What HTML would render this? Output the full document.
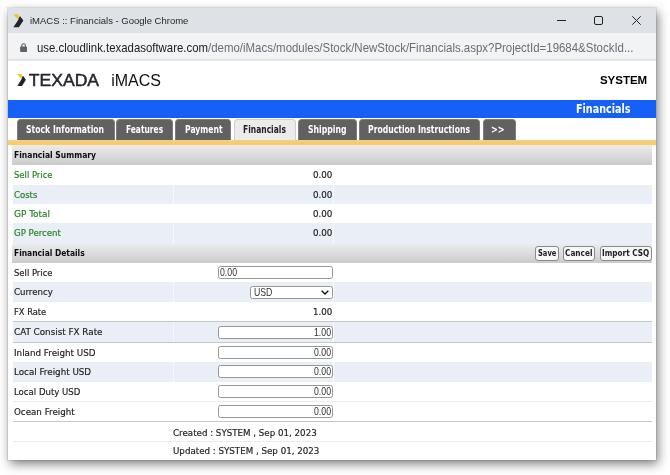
<!DOCTYPE html>
<html><head><meta charset="utf-8"><title>iMACS :: Financials</title>
<style>
*{box-sizing:border-box;margin:0;padding:0}
html,body{width:670px;height:475px;background:#fff;overflow:hidden}
body{position:relative;font-family:"DejaVu Sans Condensed","DejaVu Sans",sans-serif;font-size:10px;color:#222}
#win{position:absolute;left:8px;top:8px;width:648px;height:452px;background:#fff;box-shadow:2px 4px 10px 0 rgba(0,0,0,.5),0 0 0 1px rgba(0,0,0,.08)}
#clip{position:absolute;left:0;top:0;width:648px;height:452px;overflow:hidden}
#pc{filter:blur(.35px);position:absolute;left:-8px;top:-8px;width:670px;height:475px}
#pc div,#pc svg,.tx{position:absolute}
.tx{white-space:nowrap;transform-origin:0 50%;display:block}
#tb{left:8px;top:8px;width:648px;height:25px;background:#dee1e6}
#ub{left:8px;top:33px;width:648px;height:28px;background:#f1f3f4;border-bottom:1px solid #e6e7e9;box-shadow:inset 0 -1px 0 #dddfe2}
#blue{left:8px;top:100px;width:648px;height:18px;background:#1660f8}
.tab{top:119px;height:21px;background:#616161;border-radius:4px 4px 0 0;border:1px solid #7c7c7c;border-bottom:none}
.tab.on{background:#ececec;border-color:#cfcfcf}
#or{left:8px;top:140px;width:648px;height:5px;background:linear-gradient(rgba(214,178,104,.6) 0,rgba(214,178,104,.6) 1px,#fccb64 1px)}
.hd{left:12px;width:640px;background:linear-gradient(#ececec,#cbcbcb)}
.rb{left:13px;width:639px;background:#eaeff7}
.sep{width:1px;background:rgba(255,255,255,.6)}
.ln{left:13px;width:639px;height:1px;background:#c6c6c6}
.in{left:218px;width:115px;height:13px;border:1px solid #979797;border-radius:2.5px;background:#fff}
.btn{top:246px;height:15px;border:1px solid #8a8a8a;border-radius:3px;background:#f7f7f7}
</style></head><body>
<div id="win"><div id="clip"><div id="pc">
 <div id="tb"></div>
 <svg style="left:13px;top:13.5px" width="11" height="14" viewBox="0 0 11 14"><path d="M0.3 0.3L5.3 0.3 5.9 2.6 4.9 5.4Z" fill="#f8c21c"/><path d="M7.1 2.3L10.4 6.6 5.9 13.2H0.3L4.9 6.6 6.3 3Z" fill="#22252d"/></svg>
 <svg style="left:554px;top:8px" width="102" height="25" viewBox="0 0 102 25" fill="none" stroke="#222" stroke-width="1"><path d="M3 12.5h9"/><rect x="40.5" y="8.5" width="8" height="8" rx="1.5"/><path d="M78.3 8.3l8.4 8.4M86.7 8.3l-8.4 8.4"/></svg>
 <div id="ub"></div>
 <svg style="left:20px;top:42.8px" width="7.2" height="9" viewBox="0 0 7 9"><rect x="0" y="3.6" width="7" height="5.4" rx="0.9" fill="#5f6368"/><path d="M1.7 4V2.6a1.8 1.8 0 0 1 3.6 0V4" fill="none" stroke="#5f6368" stroke-width="1.1"/></svg>

 <svg style="left:17px;top:73px" width="84" height="14" viewBox="0 0 84 14"><path d="M0.3 1.0 4.5 1.0 5.0 3.1 4.2 5.7Z" fill="#f8c21c"/><path d="M6.0 2.8 8.9 6.8 5.0 13.0 0.3 13.0 4.2 6.8 5.4 3.5Z" fill="#22252d"/><text x="11.8" y="12.9" font-family="Liberation Sans, sans-serif" font-size="16.3" textLength="70.3" lengthAdjust="spacingAndGlyphs" fill="#22252d" stroke="#22252d" stroke-width="0.45">TEXADA</text></svg>

 <div id="blue"></div>
 <div class="tab" style="left:17px;width:98px"></div>
 <div class="tab" style="left:116px;width:57px"></div>
 <div class="tab" style="left:175px;width:56px"></div>
 <div class="tab on" style="left:234px;width:62px"></div>
 <div class="tab" style="left:298px;width:59px"></div>
 <div class="tab" style="left:359px;width:121px"></div>
 <div class="tab" style="left:483px;width:32.5px"></div>
 <div id="or"></div>

 <div class="rb" style="top:185px;height:19px"></div>
 <div class="rb" style="top:223px;height:21px"></div>
 <div class="rb" style="top:282px;height:20px"></div>
 <div class="rb" style="top:322px;height:20px"></div>
 <div class="rb" style="top:362px;height:20px"></div>
 <div class="sep" style="left:173px;top:164px;height:80px"></div>
 <div class="sep" style="left:333px;top:164px;height:80px"></div>
 <div class="sep" style="left:173px;top:263px;height:158px"></div>
 <div class="sep" style="left:333px;top:263px;height:158px"></div>
 <div class="ln" style="top:321px"></div>
 <div class="ln" style="top:342px"></div>
 <div class="ln" style="top:401px;background:#ebebeb"></div>
 <div class="ln" style="top:421px"></div>
 <div class="ln" style="top:441px;background:#ebebeb"></div>
 <div class="hd" style="top:145px;height:20px"></div>
 <div class="hd" style="top:244px;height:19px"></div>

 <div class="btn" style="left:534.5px;width:24.5px"></div>
 <div class="btn" style="left:562.5px;width:32.5px"></div>
 <div class="btn" style="left:599.5px;width:52px"></div>

 <div class="in" style="top:266px"></div>
 <div class="in" style="top:286px;left:250px;width:83px"></div>
 <svg style="left:320.7px;top:290px" width="8" height="5" viewBox="0 0 8 5"><path d="M0.7 0.7L4 4 7.3 0.7" fill="none" stroke="#111" stroke-width="1.4"/></svg>
 <div class="in" style="top:326px"></div>
 <div class="in" style="top:346px"></div>
 <div class="in" style="top:365px"></div>
 <div class="in" style="top:385px"></div>
 <div class="in" style="top:405px"></div>
<span class="tx" style="left:29.6px;top:16.00px;font:normal 9.9px/1 'Liberation Sans',sans-serif;color:#1f1f1f;transform:scaleX(0.9621);">iMACS :: Financials - Google Chrome</span>
<span class="tx" style="left:37.0px;top:43.00px;font:normal 11.9px/1 'Liberation Sans',sans-serif;color:#202124;transform:scaleX(0.9582);">use.cloudlink.texadasoftware.com</span>
<span class="tx" style="left:208.0px;top:43.00px;font:normal 11.9px/1 'Liberation Sans',sans-serif;color:#6a6e74;transform:scaleX(0.9630);">/demo/iMacs/modules/Stock/NewStock/Financials.aspx?ProjectId=19684&amp;StockId...</span>
<span class="tx" style="left:111.2px;top:73.00px;font:normal 16px/1 'Liberation Sans',sans-serif;color:#111;">iMACS</span>
<span class="tx" style="left:599.9px;top:75.00px;font:bold 11.5px/1 'Liberation Sans',sans-serif;color:#000;">SYSTEM</span>
<span class="tx" style="left:575.9px;top:104.00px;font:bold 11.4px/1 'DejaVu Sans Condensed','DejaVu Sans',sans-serif;color:#fff;transform:scaleX(0.9357);">Financials</span>
<span class="tx" style="left:26.4px;top:125.00px;font:bold 9.6px/1 'DejaVu Sans Condensed','DejaVu Sans',sans-serif;color:#fff;transform:scaleX(0.8935);">Stock Information</span>
<span class="tx" style="left:125.8px;top:125.00px;font:bold 9.6px/1 'DejaVu Sans Condensed','DejaVu Sans',sans-serif;color:#fff;transform:scaleX(0.8685);">Features</span>
<span class="tx" style="left:184.7px;top:125.00px;font:bold 9.6px/1 'DejaVu Sans Condensed','DejaVu Sans',sans-serif;color:#fff;transform:scaleX(0.8880);">Payment</span>
<span class="tx" style="left:307.8px;top:125.00px;font:bold 9.6px/1 'DejaVu Sans Condensed','DejaVu Sans',sans-serif;color:#fff;transform:scaleX(0.8960);">Shipping</span>
<span class="tx" style="left:368.0px;top:125.00px;font:bold 9.6px/1 'DejaVu Sans Condensed','DejaVu Sans',sans-serif;color:#fff;transform:scaleX(0.8903);">Production Instructions</span>
<span class="tx" style="left:491.4px;top:125.00px;font:bold 9.6px/1 'DejaVu Sans Condensed','DejaVu Sans',sans-serif;color:#fff;transform:scaleX(0.9400);">&gt;&gt;</span>
<span class="tx" style="left:243.3px;top:125.00px;font:bold 9.6px/1 'DejaVu Sans Condensed','DejaVu Sans',sans-serif;color:#222;transform:scaleX(0.8761);">Financials</span>
<span class="tx" style="left:13.6px;top:150.00px;font:bold 9.5px/1 'DejaVu Sans Condensed','DejaVu Sans',sans-serif;color:#0c0c0c;transform:scaleX(0.8915);">Financial Summary</span>
<span class="tx" style="left:13.6px;top:171.00px;font:normal 9.1px/1 'DejaVu Sans',sans-serif;color:#218221;transform:scaleX(0.9277);-webkit-text-stroke:.18px;">Sell Price</span>
<span class="tx" style="left:312.7px;top:171.00px;font:normal 9.1px/1 'DejaVu Sans',sans-serif;color:#222;transform:scaleX(0.9580);-webkit-text-stroke:.18px;">0.00</span>
<span class="tx" style="left:13.6px;top:191.00px;font:normal 9.1px/1 'DejaVu Sans',sans-serif;color:#218221;transform:scaleX(0.9372);-webkit-text-stroke:.18px;">Costs</span>
<span class="tx" style="left:312.7px;top:191.00px;font:normal 9.1px/1 'DejaVu Sans',sans-serif;color:#222;transform:scaleX(0.9580);-webkit-text-stroke:.18px;">0.00</span>
<span class="tx" style="left:13.6px;top:210.00px;font:normal 9.1px/1 'DejaVu Sans',sans-serif;color:#218221;transform:scaleX(0.9817);-webkit-text-stroke:.18px;">GP Total</span>
<span class="tx" style="left:312.7px;top:210.00px;font:normal 9.1px/1 'DejaVu Sans',sans-serif;color:#222;transform:scaleX(0.9580);-webkit-text-stroke:.18px;">0.00</span>
<span class="tx" style="left:13.6px;top:229.00px;font:normal 9.1px/1 'DejaVu Sans',sans-serif;color:#218221;transform:scaleX(0.9448);-webkit-text-stroke:.18px;">GP Percent</span>
<span class="tx" style="left:312.7px;top:229.00px;font:normal 9.1px/1 'DejaVu Sans',sans-serif;color:#222;transform:scaleX(0.9580);-webkit-text-stroke:.18px;">0.00</span>
<span class="tx" style="left:13.6px;top:248.00px;font:bold 9.5px/1 'DejaVu Sans Condensed','DejaVu Sans',sans-serif;color:#0c0c0c;transform:scaleX(0.8831);">Financial Details</span>
<span class="tx" style="left:537.9px;top:249.00px;font:bold 8.8px/1 'DejaVu Sans Condensed','DejaVu Sans',sans-serif;color:#222;transform:scaleX(0.8527);">Save</span>
<span class="tx" style="left:565.4px;top:249.00px;font:bold 8.8px/1 'DejaVu Sans Condensed','DejaVu Sans',sans-serif;color:#222;transform:scaleX(0.9268);">Cancel</span>
<span class="tx" style="left:602.2px;top:249.00px;font:bold 8.8px/1 'DejaVu Sans Condensed','DejaVu Sans',sans-serif;color:#222;transform:scaleX(0.9229);">Import CSQ</span>
<span class="tx" style="left:13.6px;top:269.00px;font:normal 9.1px/1 'DejaVu Sans',sans-serif;color:#222;transform:scaleX(0.9277);-webkit-text-stroke:.18px;">Sell Price</span>
<span class="tx" style="left:13.6px;top:288.00px;font:normal 9.1px/1 'DejaVu Sans',sans-serif;color:#222;transform:scaleX(0.9467);-webkit-text-stroke:.18px;">Currency</span>
<span class="tx" style="left:13.6px;top:308.00px;font:normal 9.1px/1 'DejaVu Sans',sans-serif;color:#222;transform:scaleX(0.9147);-webkit-text-stroke:.18px;">FX Rate</span>
<span class="tx" style="left:13.6px;top:328.00px;font:normal 9.1px/1 'DejaVu Sans',sans-serif;color:#222;transform:scaleX(0.9656);-webkit-text-stroke:.18px;">CAT Consist FX Rate</span>
<span class="tx" style="left:13.6px;top:349.00px;font:normal 9.1px/1 'DejaVu Sans',sans-serif;color:#222;transform:scaleX(0.9631);-webkit-text-stroke:.18px;">Inland Freight USD</span>
<span class="tx" style="left:13.6px;top:368.00px;font:normal 9.1px/1 'DejaVu Sans',sans-serif;color:#222;transform:scaleX(0.9622);-webkit-text-stroke:.18px;">Local Freight USD</span>
<span class="tx" style="left:13.6px;top:388.00px;font:normal 9.1px/1 'DejaVu Sans',sans-serif;color:#222;transform:scaleX(0.9404);-webkit-text-stroke:.18px;">Local Duty USD</span>
<span class="tx" style="left:13.6px;top:408.00px;font:normal 9.1px/1 'DejaVu Sans',sans-serif;color:#222;transform:scaleX(0.9587);-webkit-text-stroke:.18px;">Ocean Freight</span>
<span class="tx" style="left:312.7px;top:308.00px;font:normal 9.1px/1 'DejaVu Sans',sans-serif;color:#222;transform:scaleX(0.9580);-webkit-text-stroke:.18px;">1.00</span>
<span class="tx" style="left:172.9px;top:429.00px;font:normal 9.1px/1 'DejaVu Sans',sans-serif;color:#222;transform:scaleX(0.9562);-webkit-text-stroke:.18px;">Created : SYSTEM , Sep 01, 2023</span>
<span class="tx" style="left:172.9px;top:447.00px;font:normal 9.1px/1 'DejaVu Sans',sans-serif;color:#222;transform:scaleX(0.9569);-webkit-text-stroke:.18px;">Updated : SYSTEM , Sep 01, 2023</span>
<span class="tx" style="left:219.8px;top:268.00px;font:normal 10.1px/1 'Liberation Sans',sans-serif;color:#303030;transform:scaleX(0.8649);">0.00</span>
<span class="tx" style="left:254.4px;top:288.00px;font:normal 10.1px/1 'Liberation Sans',sans-serif;color:#303030;transform:scaleX(0.8633);">USD</span>
<span class="tx" style="left:313.8px;top:328.00px;font:normal 10.1px/1 'Liberation Sans',sans-serif;color:#303030;transform:scaleX(0.8649);">1.00</span>
<span class="tx" style="left:313.8px;top:348.00px;font:normal 10.1px/1 'Liberation Sans',sans-serif;color:#303030;transform:scaleX(0.8649);">0.00</span>
<span class="tx" style="left:313.8px;top:367.00px;font:normal 10.1px/1 'Liberation Sans',sans-serif;color:#303030;transform:scaleX(0.8649);">0.00</span>
<span class="tx" style="left:313.8px;top:387.00px;font:normal 10.1px/1 'Liberation Sans',sans-serif;color:#303030;transform:scaleX(0.8649);">0.00</span>
<span class="tx" style="left:313.8px;top:407.00px;font:normal 10.1px/1 'Liberation Sans',sans-serif;color:#303030;transform:scaleX(0.8649);">0.00</span>
</div></div></div>
</body></html>
